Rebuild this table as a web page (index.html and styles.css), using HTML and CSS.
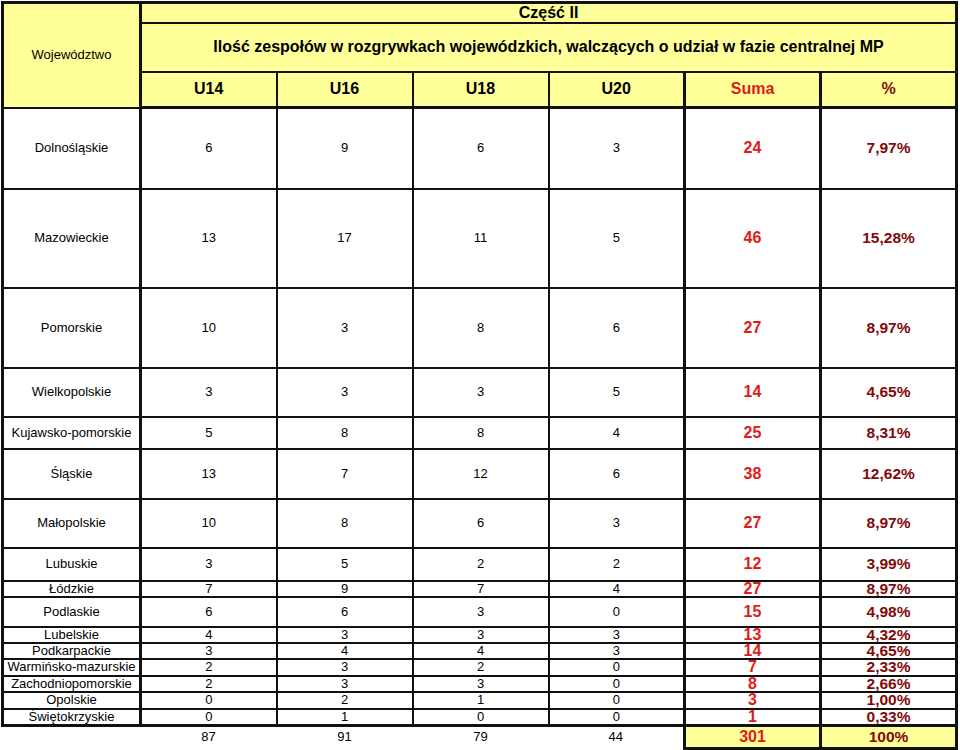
FILE: index.html
```html
<!DOCTYPE html>
<html lang="pl">
<head>
<meta charset="utf-8">
<title>Część II</title>
<link rel="stylesheet" href="styles.css">
</head>
<body>
<table class="sheet">
  <colgroup>
    <col class="c-name"><col class="c-num"><col class="c-num"><col class="c-num"><col class="c-num"><col class="c-num"><col class="c-num">
  </colgroup>
  <thead>
    <tr class="h1">
      <th class="hdr name top" rowspan="3">Województwo</th>
      <th class="hdr bold top thickl thickr" colspan="6">Część II</th>
    </tr>
    <tr class="h2">
      <th class="hdr bold thickl thickr" colspan="6">Ilość zespołów w rozgrywkach wojewódzkich, walczących o udział w fazie centralnej MP</th>
    </tr>
    <tr class="h3">
      <th class="hdr bold thickl thickb">U14</th>
      <th class="hdr bold thickb">U16</th>
      <th class="hdr bold thickb">U18</th>
      <th class="hdr bold thickb">U20</th>
      <th class="hdr bold red thickl thickb">Suma</th>
      <th class="hdr bold dred thickl thickr thickb">%</th>
    </tr>
  </thead>
  <tbody>
    <tr style="height:81px"><td class="name">Dolnośląskie</td><td class="thickl">6</td><td>9</td><td>6</td><td>3</td><td class="sum thickl">24</td><td class="pct thickl thickr">7,97%</td></tr>
    <tr style="height:99px"><td class="name">Mazowieckie</td><td class="thickl">13</td><td>17</td><td>11</td><td>5</td><td class="sum thickl">46</td><td class="pct thickl thickr">15,28%</td></tr>
    <tr style="height:80px"><td class="name">Pomorskie</td><td class="thickl">10</td><td>3</td><td>8</td><td>6</td><td class="sum thickl">27</td><td class="pct thickl thickr">8,97%</td></tr>
    <tr style="height:49px"><td class="name">Wielkopolskie</td><td class="thickl">3</td><td>3</td><td>3</td><td>5</td><td class="sum thickl">14</td><td class="pct thickl thickr">4,65%</td></tr>
    <tr style="height:32px"><td class="name">Kujawsko-pomorskie</td><td class="thickl">5</td><td>8</td><td>8</td><td>4</td><td class="sum thickl">25</td><td class="pct thickl thickr">8,31%</td></tr>
    <tr style="height:50px"><td class="name">Śląskie</td><td class="thickl">13</td><td>7</td><td>12</td><td>6</td><td class="sum thickl">38</td><td class="pct thickl thickr">12,62%</td></tr>
    <tr style="height:49px"><td class="name">Małopolskie</td><td class="thickl">10</td><td>8</td><td>6</td><td>3</td><td class="sum thickl">27</td><td class="pct thickl thickr">8,97%</td></tr>
    <tr style="height:33px"><td class="name">Lubuskie</td><td class="thickl">3</td><td>5</td><td>2</td><td>2</td><td class="sum thickl">12</td><td class="pct thickl thickr">3,99%</td></tr>
    <tr style="height:16px"><td class="name">Łódzkie</td><td class="thickl">7</td><td>9</td><td>7</td><td>4</td><td class="sum thickl">27</td><td class="pct thickl thickr">8,97%</td></tr>
    <tr style="height:30px"><td class="name">Podlaskie</td><td class="thickl">6</td><td>6</td><td>3</td><td>0</td><td class="sum thickl">15</td><td class="pct thickl thickr">4,98%</td></tr>
    <tr style="height:16px"><td class="name">Lubelskie</td><td class="thickl">4</td><td>3</td><td>3</td><td>3</td><td class="sum thickl">13</td><td class="pct thickl thickr">4,32%</td></tr>
    <tr style="height:16px"><td class="name">Podkarpackie</td><td class="thickl">3</td><td>4</td><td>4</td><td>3</td><td class="sum thickl">14</td><td class="pct thickl thickr">4,65%</td></tr>
    <tr style="height:17px"><td class="name">Warmińsko-mazurskie</td><td class="thickl">2</td><td>3</td><td>2</td><td>0</td><td class="sum thickl">7</td><td class="pct thickl thickr">2,33%</td></tr>
    <tr style="height:16px"><td class="name">Zachodniopomorskie</td><td class="thickl">2</td><td>3</td><td>3</td><td>0</td><td class="sum thickl">8</td><td class="pct thickl thickr">2,66%</td></tr>
    <tr style="height:17px"><td class="name">Opolskie</td><td class="thickl">0</td><td>2</td><td>1</td><td>0</td><td class="sum thickl">3</td><td class="pct thickl thickr">1,00%</td></tr>
    <tr class="last" style="height:16px"><td class="name">Świętokrzyskie</td><td class="thickl">0</td><td>1</td><td>0</td><td>0</td><td class="sum thickl">1</td><td class="pct thickl thickr">0,33%</td></tr>
    <tr class="total" style="height:23px"><td class="blank"></td><td class="blank">87</td><td class="blank">91</td><td class="blank">79</td><td class="blank">44</td><td class="sum tot">301</td><td class="pct tot">100%</td></tr>
  </tbody>
</table>
</body>
</html>
```

FILE: styles.css
```css
html, body {
  margin: 0;
  padding: 0;
  background: #ffffff;
}

body {
  padding: 1px 0 0 1px;
  font-family: "Liberation Sans", Arial, sans-serif;
  color: #000000;
}

.sheet {
  border-collapse: collapse;
  table-layout: fixed;
  width: 956px;
}

.c-name { width: 138px; }
.c-num { width: 136px; }

.sheet th,
.sheet td {
  padding: 0;
  border: 2px solid #111111;
  text-align: center;
  vertical-align: middle;
  font-size: 13px;
  line-height: 14px;
  white-space: nowrap;
  overflow: hidden;
}

.sheet td.name,
.sheet th.name {
  border-left: 3px solid #111111;
}

.h1 { height: 20px; }
.h2 { height: 49px; }
.h3 { height: 36px; }

.hdr {
  background: #ffff99;
  font-weight: normal;
}

.hdr.bold {
  font-weight: bold;
  font-size: 16px;
}

.top { border-top: 3px solid #111111 !important; }
.thickl { border-left: 3px solid #111111 !important; }
.thickr { border-right: 3px solid #111111 !important; }
.thickb { border-bottom: 3px solid #111111 !important; }

.red { color: #e01b1b; }
.dred { color: #7f0a0a; }

.sum {
  color: #e01b1b;
  font-weight: bold;
  font-size: 16px !important;
}

.pct {
  color: #7f0a0a;
  font-weight: bold;
  font-size: 15.5px !important;
}

.last td {
  border-bottom: 3px solid #111111;
}

.total td.blank {
  border: none;
  border-top: 3px solid #111111;
}

.total td.tot {
  background: #ffff99;
  border: 3px solid #111111;
}
```
